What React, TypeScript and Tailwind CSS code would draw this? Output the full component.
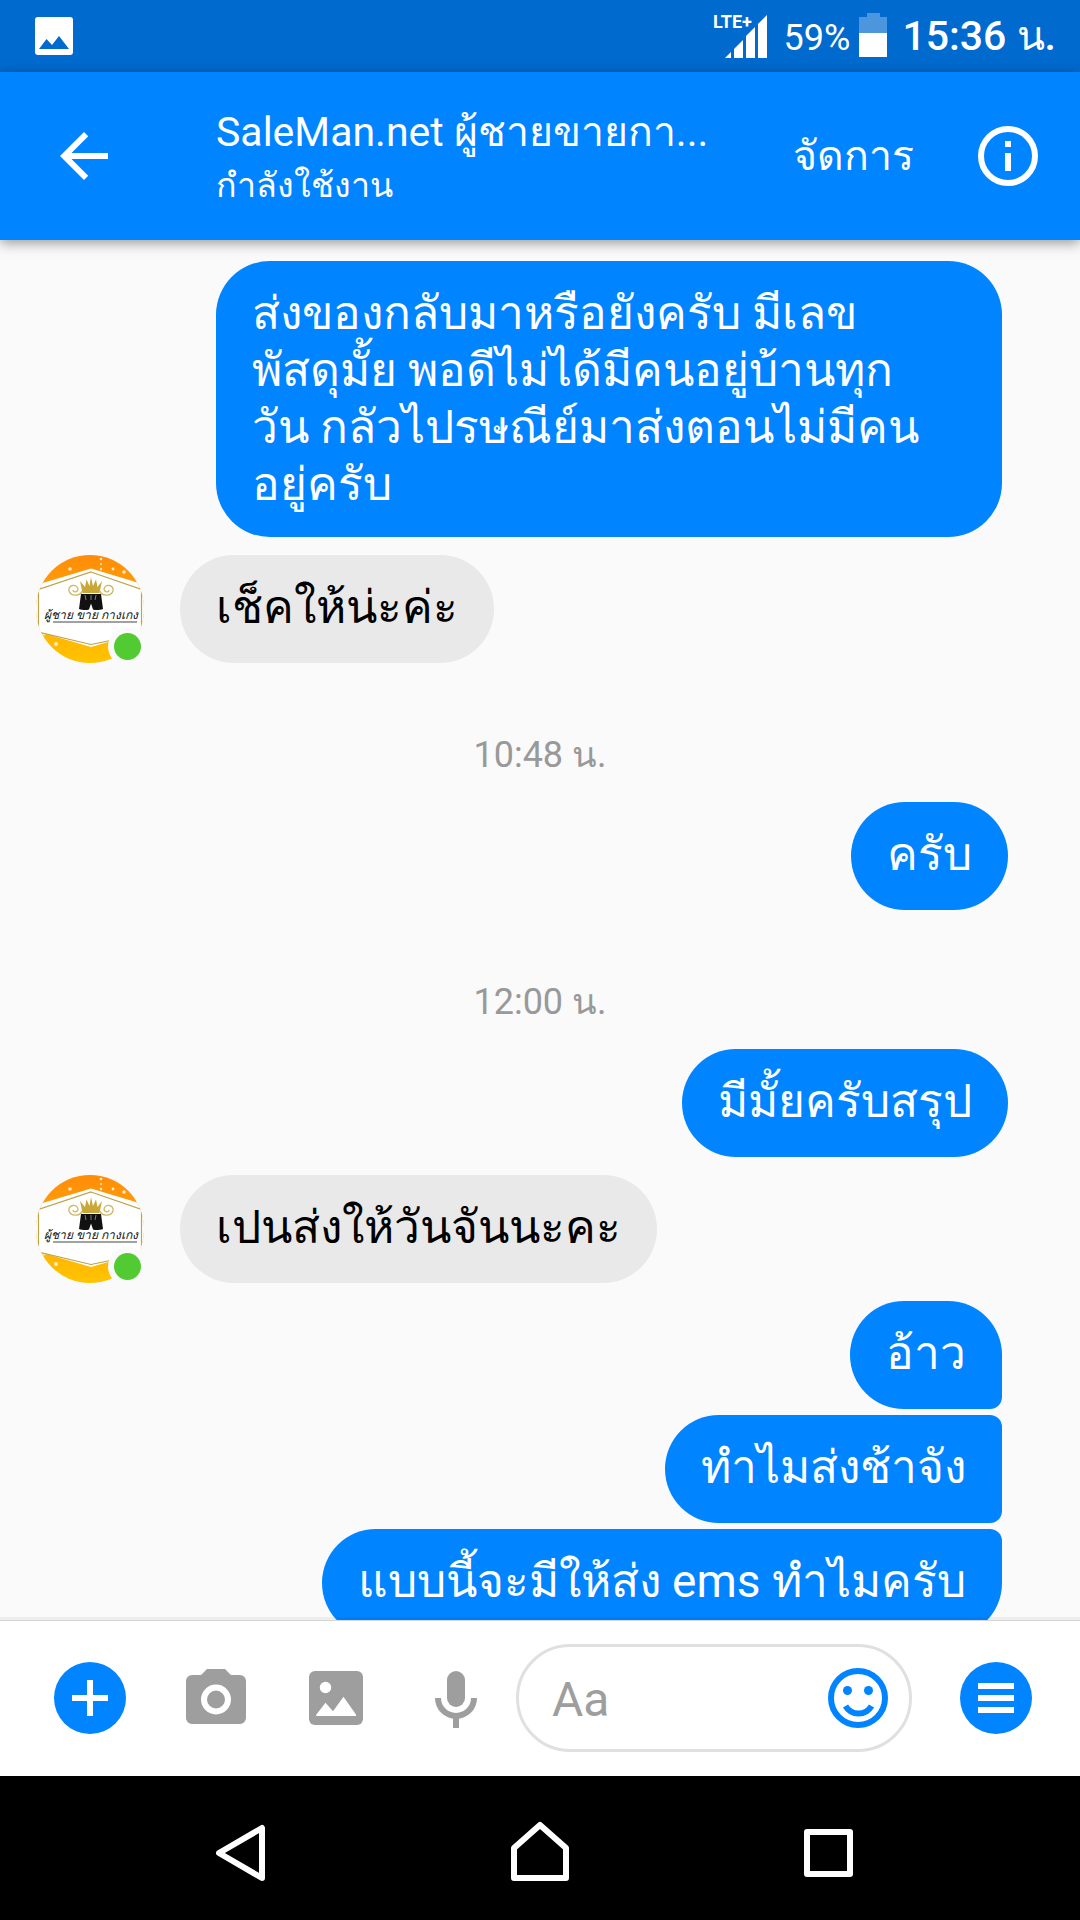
type Message = {
  id: number;
  text: string;
  from: "me" | "page";
  shape: string;
};

type Group = {
  time?: string;
  messages: Message[];
};

const groups: Group[] = [
  {
    messages: [
      {
        id: 1,
        from: "me",
        text: "ส่งของกลับมาหรือยังครับ มีเลข\nพัสดุมั้ย พอดีไม่ได้มีคนอยู่บ้านทุก\nวัน กลัวไปรษณีย์มาส่งตอนไม่มีคน\nอยู่ครับ",
        shape: "w-full mr-[78px] rounded-[54px]",
      },
      { id: 2, from: "page", text: "เช็คให้น่ะค่ะ", shape: "mt-[18px]" },
    ],
  },
  {
    time: "10:48 น.",
    messages: [{ id: 3, from: "me", text: "ครับ", shape: "mr-[72px] rounded-[54px]" }],
  },
  {
    time: "12:00 น.",
    messages: [
      { id: 4, from: "me", text: "มีมั้ยครับสรุป", shape: "mr-[72px] rounded-[54px]" },
      { id: 5, from: "page", text: "เปนส่งให้วันจันนะคะ", shape: "mt-[18px]" },
      {
        id: 6,
        from: "me",
        text: "อ้าว",
        shape: "mt-[18px] mr-[78px] rounded-[54px] rounded-br-xl",
      },
      {
        id: 7,
        from: "me",
        text: "ทำไมส่งช้าจัง",
        shape: "mt-[6px] mr-[78px] rounded-l-[54px] rounded-r-xl",
      },
      {
        id: 8,
        from: "me",
        text: "แบบนี้จะมีให้ส่ง ems ทำไมครับ",
        shape: "mt-[6px] mr-[78px] rounded-[54px] rounded-tr-xl",
      },
    ],
  },
];

function Avatar() {
  return (
    <svg viewBox="0 0 108 108" className="size-[108px] shrink-0" role="img" aria-label="SaleMan.net">
      <defs>
        <linearGradient id="avatar-bg" x1="0" y1="0" x2="0" y2="1">
          <stop offset="0" stopColor="#ff8c0a" />
          <stop offset="1" stopColor="#ffc400" />
        </linearGradient>
        <clipPath id="avatar-clip">
          <circle cx="54" cy="54" r="54" />
        </clipPath>
      </defs>
      <g clipPath="url(#avatar-clip)">
        <rect width="108" height="108" fill="url(#avatar-bg)" />
        <g fill="#ffe9c4">
          <circle cx="65" cy="4" r="1.3" />
          <circle cx="65" cy="9" r="1" />
          <circle cx="65" cy="14" r="1.2" />
          <circle cx="34" cy="14" r="1.8" />
          <circle cx="77" cy="14" r="1.4" />
          <circle cx="88" cy="17" r="1.8" />
          <circle cx="20" cy="89" r="2" />
          <circle cx="8" cy="79" r="1.6" />
        </g>
        <path d="M0 30 55 13.500 110 30V76L55 92 0 76Z" fill="#fff" />
        <path
          d="M55 17 105.500 34.500V79L55 89.500 2.500 77V34.500Z"
          fill="#fff"
          stroke="#b9a44a"
          strokeWidth="1.200"
        />
      </g>
      <path
        d="M44 26l5 6 1.500-7.500 3 6.500L55 22l2 9 3-6.500 1.500 7.500 4.500-6-2.500 12h-17z"
        fill="#c9a83a"
      />
      <g fill="none" stroke="#cdb968" strokeWidth="1.300">
        <path d="M46 36c-1 5-11 6-13 0-1-6 8-8 9-2 0 3-5 4-5 1" />
        <path d="M64 36c1 5 11 6 13 0 1-6-8-8-9-2 0 3 5 4 5 1" />
      </g>
      <path d="M45 39h20l2 15c-3 1-7 1.500-10 .5l-2-6-2 6c-3 1-7 .5-10-.5z" fill="#111" />
      <path d="M49 40l1 5M60 40l-1 5M55 40v5" stroke="#999" strokeWidth=".8" />
      <text
        x="55"
        y="64"
        textAnchor="middle"
        fill="#111"
        fontSize="12"
        fontStyle="italic"
        className="font-[Roboto,sans-serif]"
      >
        ผู้ชาย ขาย กางเกง
      </text>
      <path d="M17 67H101" stroke="#444" strokeWidth="1" />
      <circle cx="91.500" cy="91.500" r="19.500" fill="#fafafa" />
      <circle cx="91.500" cy="91.500" r="13.500" fill="#51cb31" />
    </svg>
  );
}

function StatusBar() {
  return (
    <div className="flex h-[72px] shrink-0 items-center justify-between bg-[#006ace] pr-6 pl-[35px]">
      <svg viewBox="0 0 38 38" className="size-[38px]" role="img" aria-label="รูปภาพ">
        <rect width="38" height="38" rx="3" fill="#fff" />
        <path d="M4 32 11.500 22 17 28 24 19 34 32Z" fill="#006ace" />
      </svg>
      <div className="flex h-full items-center text-white">
        <svg viewBox="0 0 56 48" className="mr-4 h-[48px] w-[56px]" role="img" aria-label="LTE+">
          <text
            x="1"
            y="16"
            fill="#fff"
            fontSize="18"
            fontWeight="700"
            className="font-[Roboto,sans-serif]"
          >
            LTE+
          </text>
          <g fill="#fff">
            <path d="M13 46 19 40V46Z" />
            <path d="M22 46V37L31 28V46Z" />
            <path d="M34 46V24L43 15V46Z" />
            <path d="M46 46V12L55 3V46Z" />
          </g>
        </svg>
        <span className="mr-[9px] pt-1 text-[36px]">59%</span>
        <svg viewBox="0 0 28 46" className="mr-[15px] h-[46px] w-[28px]" role="img" aria-label="แบตเตอรี่">
          <path d="M8 0h13v4h7v16H0V4h8z" fill="#4c96dd" />
          <path d="M0 20h28v24H0z" fill="#fff" />
        </svg>
        <span className="pt-0.5 text-[41px] font-medium">15:36 น.</span>
      </div>
    </div>
  );
}

function Header() {
  return (
    <header className="relative z-10 flex h-[168px] shrink-0 items-center bg-[#0084ff] pr-[42px] pl-12 text-white shadow-[0_3px_12px_rgba(0,0,0,0.4)]">
      <button aria-label="กลับ" className="mr-24 shrink-0">
        <svg viewBox="0 0 24 24" className="size-[72px]" fill="currentColor">
          <path d="M20 11H7.830l5.590-5.590L12 4l-8 8 8 8 1.410-1.410L7.830 13H20v-2z" />
        </svg>
      </button>
      <div className="min-w-0 flex-1 pt-1">
        <h1 className="truncate text-[41px] leading-[54px]">SaleMan.net ผู้ชายขายกา...</h1>
        <p className="text-[34px] leading-[52px]">กำลังใช้งาน</p>
      </div>
      <button className="mr-16 pt-0.5 text-[41px]">จัดการ</button>
      <button aria-label="ข้อมูล" className="shrink-0">
        <svg viewBox="0 0 60 60" className="size-[60px]">
          <circle cx="30" cy="30" r="27" fill="none" stroke="currentColor" strokeWidth="6" />
          <path d="M27 15h6v6h-6zM27 27h6v18h-6z" fill="currentColor" />
        </svg>
      </button>
    </header>
  );
}

function MessageRow({ message }: { message: Message }) {
  if (message.from === "page") {
    return (
      <div className={`flex gap-9 pl-9 ${message.shape}`}>
        <Avatar />
        <p className="min-h-[108px] rounded-[54px] bg-[#e9e9e9] px-9 py-6 text-[46px] leading-[57px] text-black">
          {message.text}
        </p>
      </div>
    );
  }

  return (
    <div className="flex justify-end pl-[216px]">
      <p
        className={`min-h-[108px] bg-[#0084ff] px-9 py-6 text-[46px] leading-[57px] whitespace-pre-line text-white ${message.shape}`}
      >
        {message.text}
      </p>
    </div>
  );
}

function Composer() {
  return (
    <form className="relative z-10 flex h-[156px] shrink-0 items-center border-t border-[#d6d6d6] bg-white pr-12 pb-0.5 pl-[54px] shadow-[0_-3px_0_rgba(0,0,0,0.05)]">
      <button type="button" aria-label="เพิ่ม" className="mr-[54px] shrink-0">
        <svg viewBox="0 0 24 24" className="size-[72px]">
          <circle cx="12" cy="12" r="12" fill="#0084ff" />
          <path d="M11 6h2v5h5v2h-5v5h-2v-5H6v-2h5z" fill="#fff" />
        </svg>
      </button>
      <div className="mr-6 flex shrink-0 gap-12 text-[#9e9e9e]">
        <button type="button" aria-label="กล้อง">
          <svg viewBox="0 0 24 24" className="size-[72px]" fill="currentColor">
            <path d="M9 2.330h6l2 2h3a2 2 0 0 1 2 2v12.330a2 2 0 0 1-2 2H4a2 2 0 0 1-2-2V6.330a2 2 0 0 1 2-2h3z" />
            <circle cx="12" cy="12.500" r="4" fill="none" stroke="#fff" strokeWidth="2" />
          </svg>
        </button>
        <button type="button" aria-label="แกลเลอรี">
          <svg viewBox="0 0 24 24" className="size-[72px]">
            <rect x="3" y="3" width="18" height="18" rx="2" fill="currentColor" />
            <circle cx="8.500" cy="8.500" r="1.900" fill="#fff" />
            <path d="M5.400 18v-.4L8.500 13.600 11 16.400 14.500 11.600 18.700 17.600V18z" fill="#fff" />
          </svg>
        </button>
        <button type="button" aria-label="ไมโครโฟน">
          <svg viewBox="0 0 24 24" className="size-[72px]">
            <rect x="9" y="3" width="6" height="12" rx="3" fill="currentColor" />
            <path d="M6 12a6 6 0 0 0 12 0M12 18v4" fill="none" stroke="currentColor" strokeWidth="2" />
          </svg>
        </button>
      </div>
      <div className="mr-12 flex h-[108px] min-w-0 flex-1 items-center rounded-full border-3 border-[#e0e0e0] pr-[21px] pl-[33px]">
        <input
          type="text"
          aria-label="ข้อความ"
          placeholder="Aa"
          className="w-full min-w-0 flex-1 pt-1 text-[48px] text-black outline-none placeholder:text-[#9e9e9e]"
        />
        <button type="button" aria-label="อีโมจิ" className="shrink-0 text-[#0084ff]">
          <svg viewBox="0 0 60 60" className="size-[60px]">
            <circle cx="30" cy="30" r="27" fill="none" stroke="currentColor" strokeWidth="6" />
            <circle cx="19.500" cy="22.500" r="4.500" fill="currentColor" />
            <circle cx="40.500" cy="22.500" r="4.500" fill="currentColor" />
            <path d="M17.500 38a15 15 0 0 0 26 0" fill="none" stroke="currentColor" strokeWidth="6" />
          </svg>
        </button>
      </div>
      <button type="button" aria-label="เมนู" className="shrink-0">
        <svg viewBox="0 0 24 24" className="size-[72px]">
          <circle cx="12" cy="12" r="12" fill="#0084ff" />
          <path d="M6 7h12v2H6zM6 11h12v2H6zM6 15h12v2H6z" fill="#fff" />
        </svg>
      </button>
    </form>
  );
}

function NavBar() {
  return (
    <nav className="flex h-36 shrink-0 items-center justify-center gap-[216px] bg-black text-white">
      <button aria-label="ย้อนกลับ">
        <svg viewBox="0 0 72 72" className="size-[72px]">
          <path
            d="M3 41 46 16V66Z"
            fill="none"
            stroke="currentColor"
            strokeWidth="6"
            strokeLinejoin="round"
          />
        </svg>
      </button>
      <button aria-label="หน้าหลัก">
        <svg viewBox="0 0 72 72" className="size-[72px]">
          <path
            d="M10 36 36 13 62 36V66H10Z"
            fill="none"
            stroke="currentColor"
            strokeWidth="6"
            strokeLinejoin="round"
          />
        </svg>
      </button>
      <button aria-label="แอปล่าสุด">
        <svg viewBox="0 0 72 72" className="size-[72px]">
          <rect
            x="15"
            y="20"
            width="43"
            height="42"
            fill="none"
            stroke="currentColor"
            strokeWidth="6"
            strokeLinejoin="round"
          />
        </svg>
      </button>
    </nav>
  );
}

export default function App() {
  return (
    <div className="flex h-screen flex-col bg-[#fafafa] font-[Roboto,sans-serif]">
      <StatusBar />
      <Header />
      <main className="min-h-0 flex-1 overflow-hidden pt-[21px]">
        {groups.map((group, i) => (
          <section key={i}>
            {group.time && (
              <p className="mt-16 mb-[19px] text-center text-[36px] leading-[56px] text-[#999]">
                {group.time}
              </p>
            )}
            {group.messages.map((message) => (
              <MessageRow key={message.id} message={message} />
            ))}
          </section>
        ))}
      </main>
      <Composer />
      <NavBar />
    </div>
  );
}
